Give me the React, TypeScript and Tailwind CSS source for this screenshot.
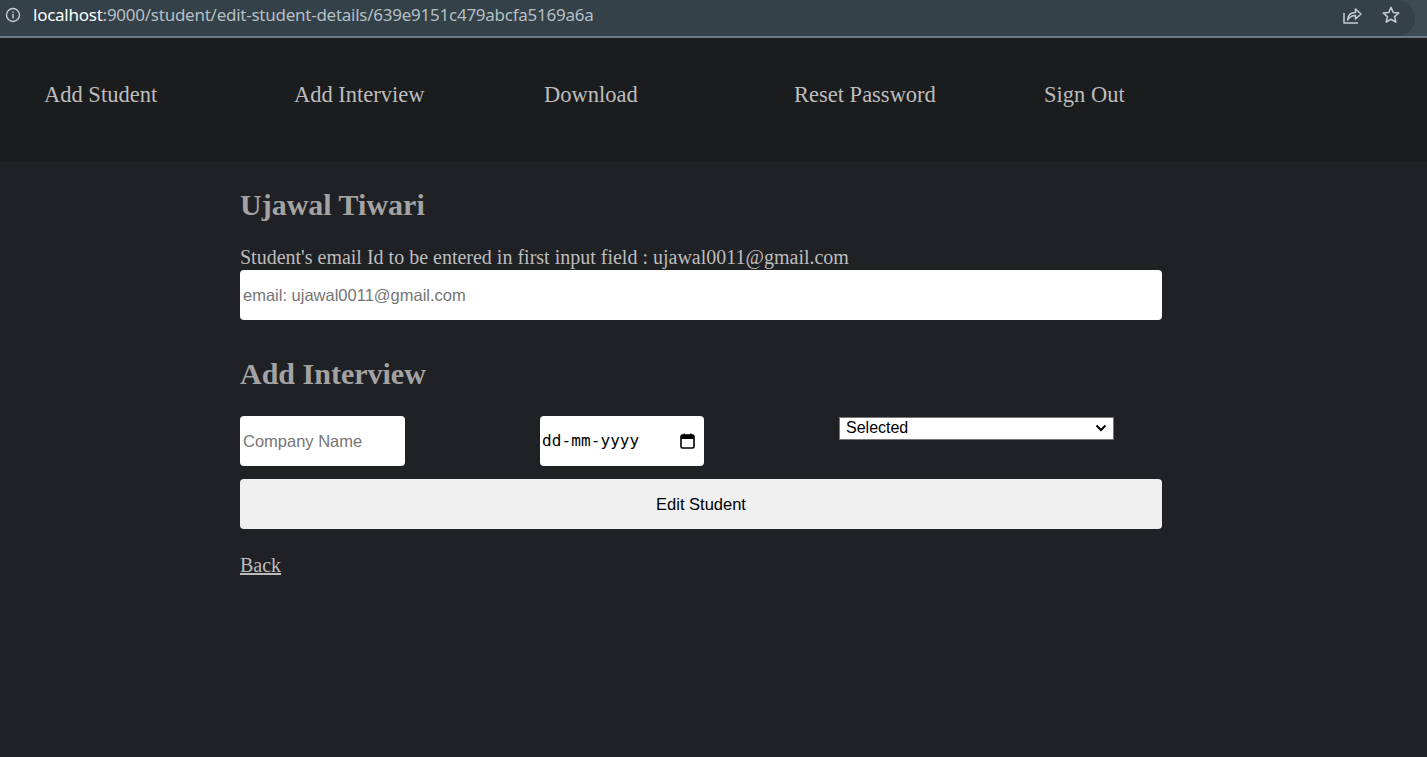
import React from "react";

export default function App() {
  const serif = { fontFamily: '"Liberation Serif", "Times New Roman", serif' };
  const nav = ["Add Student", "Add Interview", "Download", "Reset Password", "Sign Out"];
  return (
    <div className="w-[1427px] h-[757px] bg-[#202125] flex flex-col overflow-hidden">
      {/* browser bar */}
      <div className="h-[38px] bg-[#3d4b53] flex flex-col shrink-0">
        <div className="h-[36px] flex">
          <div className="flex-1 mr-[12px] bg-[#344148] rounded-r-[18px] flex items-center pl-[5px] pr-[14px] pb-[6px]">
            <svg width="16" height="16" viewBox="0 0 16 16" className="shrink-0">
              <circle cx="8" cy="8" r="6.5" fill="none" stroke="#c4cdd2" strokeWidth="1.4" />
              <rect x="7.3" y="7" width="1.4" height="4.5" fill="#c4cdd2" />
              <rect x="7.3" y="4.4" width="1.4" height="1.5" fill="#c4cdd2" />
            </svg>
            <div className="ml-[12px] text-[17px] tracking-[-0.25px] text-[#b4bfc5]" style={{ fontFamily: '"Noto Sans", Roboto, sans-serif' }}>
              <span className="text-white">localhost</span>:9000/student/edit-student-details/639e9151c479abcfa5169a6a
            </div>
            <div className="flex-1" />
            <svg width="22" height="22" viewBox="0 0 22 22" className="mr-[18px]">
              <path d="M3 9 V19 H17" fill="none" stroke="#c4cdd2" strokeWidth="1.5" />
              <path d="M6.5 16 C7 11 10 8.5 14.5 8.5 V5 L20 10 L14.5 15 V11.5 C11 11.5 8.5 13 6.5 16 Z" fill="none" stroke="#c4cdd2" strokeWidth="1.5" strokeLinejoin="round" />
            </svg>
            <svg width="20" height="20" viewBox="0 0 24 24">
              <path d="M12 2.8 L14.7 9 L21.4 9.6 L16.3 14 L17.8 20.6 L12 17.1 L6.2 20.6 L7.7 14 L2.6 9.6 L9.3 9 Z" fill="none" stroke="#c4cdd2" strokeWidth="1.8" strokeLinejoin="round" />
            </svg>
          </div>
        </div>
        <div className="h-[2px] bg-[#6a7a82]" />
      </div>

      {/* nav */}
      <div className="h-[124px] bg-[#1b1c1e] flex items-center pl-[44px] pb-[10px] shrink-0" style={serif}>
        {nav.map((n) => (
          <div key={n} className="w-[250px] text-[22.5px] text-[#bdbdbd] leading-none">
            {n}
          </div>
        ))}
      </div>

      {/* main */}
      <div className="flex-1 pl-[240px]">
        <div className="w-[922px] flex flex-col">
          <h1 className="mt-[26px] text-[30px] leading-[34px] font-bold text-[#a3a3a3]" style={serif}>
            Ujawal Tiwari
          </h1>
          <p className="mt-[24px] text-[20px] leading-[23px] text-[#bdbdbd]" style={serif}>
            Student's email Id to be entered in first input field : ujawal0011@gmail.com
          </p>
          <input
            className="mt-[1px] h-[50px] w-full bg-white rounded-[4px] px-[3px] text-[16.5px] text-black placeholder:text-[#757575] outline-none"
            style={{ fontFamily: '"Liberation Sans", Arial, sans-serif' }}
            placeholder="email: ujawal0011@gmail.com"
          />
          <h2 className="mt-[37px] text-[30px] leading-[34px] font-bold text-[#a3a3a3]" style={serif}>
            Add Interview
          </h2>
          <div className="mt-[25px] grid grid-cols-[300px_299px_300px] items-start" style={{ fontFamily: '"Liberation Sans", Arial, sans-serif' }}>
            <input
              className="h-[50px] w-[165px] bg-white rounded-[4px] px-[3px] text-[16.5px] text-black placeholder:text-[#757575] outline-none"
              placeholder="Company Name"
            />
            <div className="h-[50px] w-[164px] bg-white rounded-[4px] flex items-center pl-[2px] pr-[9px]">
              <span className="text-[16px] text-black tracking-[0.1px]" style={{ fontFamily: '"DejaVu Sans Mono", monospace' }}>
                dd-mm-yyyy
              </span>
              <div className="flex-1" />
              <svg width="15" height="16" viewBox="0 0 15 16">
                <rect x="1" y="2" width="13" height="13" rx="1.5" fill="none" stroke="#000" strokeWidth="1.6" />
                <rect x="1" y="2" width="13" height="4" fill="#000" />
                <rect x="3.5" y="0.5" width="1.6" height="3" fill="#000" />
                <rect x="9.9" y="0.5" width="1.6" height="3" fill="#000" />
              </svg>
            </div>
            <div className="relative w-[275px] h-[23px]">
              <select className="appearance-none w-full h-full bg-white border border-[#767676] text-[16px] leading-[20px] text-black pl-[6px] outline-none rounded-none">
                <option>Selected</option>
              </select>
              <svg width="12" height="8" viewBox="0 0 12 8" className="absolute right-[7px] top-[8px] pointer-events-none">
                <path d="M1.5 1.5 L6 6 L10.5 1.5" fill="none" stroke="#000" strokeWidth="2" />
              </svg>
            </div>
          </div>
          <button
            className="mt-[13px] h-[50px] w-full bg-[#efefef] rounded-[4px] text-[16.5px] text-black"
            style={{ fontFamily: '"Liberation Sans", Arial, sans-serif' }}
          >
            Edit Student
          </button>
          <a href="#" className="mt-[25px] self-start text-[20px] leading-[23px] text-[#bdbdbd] underline" style={serif}>
            Back
          </a>
        </div>
      </div>
    </div>
  );
}
